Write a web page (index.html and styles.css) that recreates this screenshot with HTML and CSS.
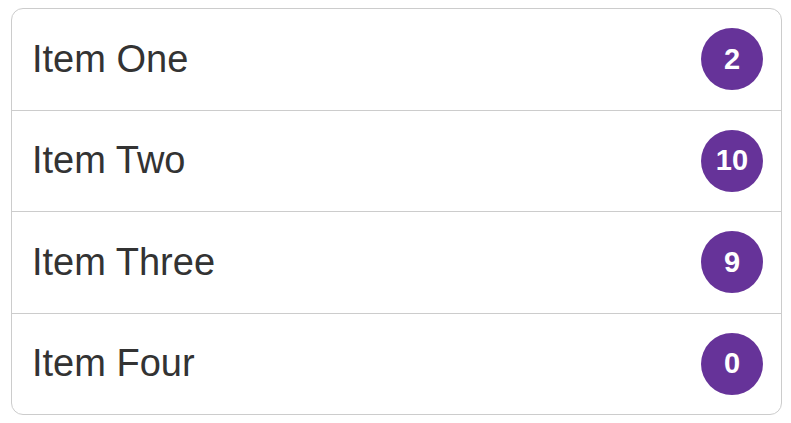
FILE: index.html
```html
<!DOCTYPE html>
<html>
<head>
<meta charset="utf-8">
<link rel="stylesheet" href="styles.css">
</head>
<body>
<ul class="list">
  <li class="item"><span class="label">Item One</span><span class="badge">2</span></li>
  <li class="item"><span class="label">Item Two</span><span class="badge">10</span></li>
  <li class="item"><span class="label">Item Three</span><span class="badge">9</span></li>
  <li class="item"><span class="label">Item Four</span><span class="badge">0</span></li>
</ul>
</body>
</html>
```
FILE: styles.css
```css
html, body {
  margin: 0;
  padding: 0;
  background: #fff;
}
body {
  padding: 8px 10px 0 11px;
  font-family: "Liberation Sans", Arial, sans-serif;
}
.list {
  list-style: none;
  margin: 0;
  padding: 0;
  width: 769px;
  border: 1px solid #cccccc;
  border-radius: 12px;
  overflow: hidden;
}
.item {
  display: flex;
  align-items: center;
  justify-content: space-between;
  height: 100.5px;
  padding: 0 18px 0 20px;
  border-top: 1px solid #cccccc;
}
.item:first-child {
  border-top: none;
}
.label {
  font-size: 38px;
  color: #333333;
}
.badge {
  width: 62px;
  height: 62px;
  border-radius: 50%;
  background: #663399;
  color: #ffffff;
  font-weight: bold;
  font-size: 29px;
  display: flex;
  align-items: center;
  justify-content: center;
}
```
